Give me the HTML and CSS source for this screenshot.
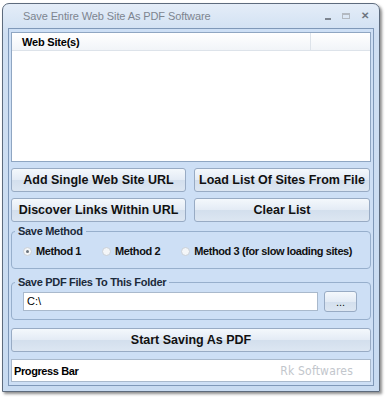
FILE: index.html
```html
<!DOCTYPE html>
<html>
<head>
<meta charset="utf-8">
<link rel="stylesheet" href="styles.css">
</head>
<body>
<div class="window">
  <div class="titlebar">
    <span class="title">Save Entire Web Site As PDF Software</span>
    <div class="controls">
      <span class="ctl min"></span>
      <span class="ctl max"></span>
      <span class="ctl close">✕</span>
    </div>
  </div>
  <div class="client">
    <div class="listview">
      <div class="lv-header">
        <div class="lv-col">Web Site(s)</div>
        <div class="lv-col2"></div>
      </div>
      <div class="lv-body"></div>
    </div>
    <div class="btn-grid">
      <button class="btn">Add Single Web Site URL</button>
      <button class="btn">Load List Of Sites From File</button>
      <button class="btn">Discover Links Within URL</button>
      <button class="btn">Clear List</button>
    </div>
    <fieldset class="group method">
      <legend>Save Method</legend>
      <div class="radios">
        <label class="radio"><span class="dot checked"></span>Method 1</label>
        <label class="radio"><span class="dot"></span>Method 2</label>
        <label class="radio"><span class="dot"></span>Method 3 (for slow loading sites)</label>
      </div>
    </fieldset>
    <fieldset class="group folder">
      <legend>Save PDF Files To This Folder</legend>
      <div class="folder-row">
        <div class="input">C:\</div>
        <button class="btn small">...</button>
      </div>
    </fieldset>
    <button class="btn wide">Start Saving As PDF</button>
    <div class="progress">
      <span class="pb-label">Progress Bar</span>
      <span class="brand">Rk Softwares</span>
    </div>
  </div>
</div>
</body>
</html>
```

FILE: styles.css
```css
* { box-sizing: border-box; }
html, body { margin: 0; padding: 0; background: #ffffff; }
body {
  width: 386px;
  height: 400px;
  font-family: "Liberation Sans", Arial, sans-serif;
  overflow: hidden;
}
.window {
  margin: 3px 0 0 2px;
  width: 378px;
  height: 389px;
  border: 1px solid #5d6b7d;
  border-radius: 7px 7px 0 0;
  background: linear-gradient(#e4edf8, #cfdff2 30px, #c8dbf1);
  box-shadow: 2px 2px 3px rgba(0,0,0,0.45);
  display: flex;
  flex-direction: column;
  padding: 0 5px 5px;
}
.titlebar {
  height: 25px;
  display: flex;
  align-items: center;
  justify-content: space-between;
  padding: 0 0 0 15px;
}
.title {
  font-size: 11px;
  color: #7d8590;
  letter-spacing: -0.1px;
}
.controls {
  display: flex;
  align-items: center;
  gap: 11px;
  padding-right: 5px;
}
.ctl { display: inline-block; }
.min { width: 6px; height: 2px; background: #7d8590; margin-top: 5px; }
.max { width: 8px; height: 6px; border: 1px solid #b3b9c1; border-top-width: 2px; }
.close { font-size: 10px; color: #6d7580; font-weight: bold; line-height: 1; }
.client {
  flex: 1;
  border: 1px solid #7f98b8;
  background: #cddff5;
  padding: 3px 2px 3px;
  display: flex;
  flex-direction: column;
}
.listview {
  height: 130px;
  border: 1px solid #8fa6c2;
  background: #ffffff;
  display: flex;
  flex-direction: column;
}
.lv-header {
  height: 18px;
  display: flex;
  background: linear-gradient(#ffffff, #f1f4f8);
  border-bottom: 1px solid #dde3ea;
}
.lv-col {
  width: 299px;
  border-right: 1px solid #dde3ea;
  font-size: 11px;
  font-weight: bold;
  letter-spacing: -0.2px;
  padding: 3px 0 0 10px;
  color: #000;
}
.lv-col2 { flex: 1; }
.lv-body { flex: 1; }
.btn {
  font-family: "Liberation Sans", Arial, sans-serif;
  font-size: 12.5px;
  font-weight: bold;
  color: #111;
  height: 24px;
  border: 1px solid #98abc4;
  border-radius: 3px;
  background: linear-gradient(#f4f8fc, #e3ebf5 50%, #d3dfed 51%, #dce6f2);
  padding: 0;
  margin: 0;
}
.btn-grid {
  display: grid;
  grid-template-columns: 175px 176px;
  column-gap: 8px;
  row-gap: 6px;
  margin-top: 6px;
}
.group {
  border: 1px solid #97afcc;
  border-radius: 4px;
  margin: 3px 0 0;
  padding: 0 0 0 11px;
  height: 44px;
  min-width: 0;
}
.group legend {
  font-size: 11px;
  font-weight: bold;
  letter-spacing: -0.3px;
  color: #1c2a3a;
  padding: 0 3px;
  margin-left: -8px;
}
.radios {
  display: flex;
  align-items: center;
  height: 26px;
  gap: 21px;
  padding-top: 2px;
}
.radio {
  display: flex;
  align-items: center;
  font-size: 11px;
  font-weight: bold;
  letter-spacing: -0.4px;
  color: #111;
}
.dot {
  width: 9px;
  height: 9px;
  border-radius: 50%;
  border: 1px solid #c9d0d8;
  background: #f4f6f8;
  margin-right: 4px;
  position: relative;
}
.dot.checked::after {
  content: "";
  position: absolute;
  left: 2px; top: 2px;
  width: 3px; height: 3px;
  border-radius: 50%;
  background: #6b737c;
}
.folder {
  margin-top: 7px;
}
.folder-row {
  display: flex;
  align-items: center;
  gap: 6px;
  padding-top: 3px;
}
.input {
  width: 295px;
  height: 19px;
  border: 1px solid #a9b9cc;
  background: #fff;
  font-size: 11px;
  padding: 2px 0 0 3px;
}
.btn.small {
  width: 33px;
  height: 21px;
  font-size: 11px;
  font-weight: normal;
}
.btn.wide {
  height: 24px;
  margin-top: 8px;
  font-size: 12.5px;
  width: 100%;
}
.progress {
  margin-top: 7px;
  height: 23px;
  border: 1px solid #a9b9cc;
  background: #fff;
  display: flex;
  align-items: center;
  justify-content: space-between;
  padding: 0 17px 0 2px;
}
.pb-label { font-size: 11px; font-weight: bold; letter-spacing: -0.4px; color: #000; }
.brand {
  font-family: "DejaVu Sans Condensed", "DejaVu Sans", sans-serif;
  font-size: 12px;
  color: #c2c6cc;
  letter-spacing: 0.2px;
}
```
